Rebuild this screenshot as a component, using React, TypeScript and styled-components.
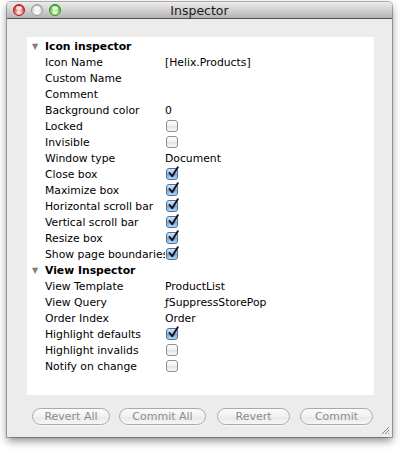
import React from "react";
import styled, { createGlobalStyle } from "styled-components";

const Global = createGlobalStyle`
  html, body { margin: 0; padding: 0; background: #ffffff; }
  body { font-family: "DejaVu Sans", "Liberation Sans", sans-serif; }
`;

const Page = styled.div`
  width: 401px;
  height: 452px;
  box-sizing: border-box;
  padding: 2px 9px 0 7px;
  background: #ffffff;
`;

const Window = styled.div`
  width: 385px;
  height: 435px;
  display: flex;
  flex-direction: column;
  background: #ececec;
  box-shadow: 0 0 0 1px rgba(0, 0, 0, 0.28), 0 4px 8px rgba(0, 0, 0, 0.45);
  border-radius: 4px 4px 0 0;
  position: relative;
`;

const TitleBar = styled.div`
  height: 16px;
  flex: none;
  display: flex;
  align-items: center;
  position: relative;
  padding: 0 0 0 6px;
  background: linear-gradient(#ececec, #d4d4d4 45%, #b4b4b4 100%);
  border-bottom: 1px solid #4f4f4f;
  border-radius: 4px 4px 0 0;
`;

const Lights = styled.div`
  display: flex;
  gap: 6px;
  z-index: 1;
`;

const Light = styled.div<{ $c: string; $d: string }>`
  width: 12px;
  height: 12px;
  border-radius: 50%;
  box-sizing: border-box;
  border: 1px solid ${(p) => p.$d};
  background: radial-gradient(circle at 50% 75%, #ffffff 0%, ${(p) => p.$c} 55%, ${(p) => p.$d} 100%);
  position: relative;
  &::after {
    content: "";
    position: absolute;
    left: 2px;
    top: 1px;
    width: 6px;
    height: 4px;
    border-radius: 50%;
    background: rgba(255, 255, 255, 0.8);
  }
`;

const Title = styled.div`
  position: absolute;
  left: 0;
  right: 0;
  top: 0;
  bottom: 0;
  display: flex;
  align-items: center;
  justify-content: center;
  font-size: 12.5px;
  color: #1a1a1a;
  font-family: "DejaVu Sans", sans-serif;
`;

const Body = styled.div`
  flex: 1;
  display: flex;
  flex-direction: column;
  padding: 18px 18px 0 20px;
`;

const Panel = styled.div`
  height: 358px;
  background: #ffffff;
  padding-top: 1px;
  box-sizing: border-box;
`;

const Row = styled.div`
  height: 16px;
  display: flex;
  align-items: center;
  font-size: 10.8px;
  color: #000;
`;

const Triangle = styled.span`
  width: 18px;
  padding-left: 5px;
  box-sizing: border-box;
  color: #808080;
  font-size: 8px;
`;

const SectionTitle = styled.span`
  font-weight: bold;
`;

const Label = styled.span`
  width: 120px;
  padding-left: 18px;
  white-space: nowrap;
  overflow: hidden;
  flex: none;
`;

const Value = styled.span`
  white-space: nowrap;
`;

const Box = styled.span<{ $on?: boolean }>`
  display: inline-flex;
  width: 12px;
  height: 12px;
  box-sizing: border-box;
  border-radius: 3px;
  margin-left: 1px;
  border: 1px solid ${(p) => (p.$on ? "#4f6e98" : "#8e8e8e")};
  background: ${(p) =>
    p.$on
      ? "linear-gradient(#d3e6f9, #8cb8e6 50%, #6fa4dc 51%, #b8d8f6)"
      : "linear-gradient(#ffffff, #f0f0f0 50%, #e2e2e2 51%, #fafafa)"};
  position: relative;
  overflow: visible;
`;

const Check = styled.svg`
  position: absolute;
  left: 1px;
  top: -3px;
  width: 11px;
  height: 12px;
`;

const ButtonBar = styled.div`
  display: flex;
  padding: 13px 0 0 5px;
`;

const Btn = styled.div<{ $w: number; $ml: number }>`
  width: ${(p) => p.$w}px;
  margin-left: ${(p) => p.$ml}px;
  height: 17px;
  box-sizing: border-box;
  border: 1px solid #a9a9a9;
  border-radius: 9px;
  background: linear-gradient(#fbfbfb, #f1f1f1 50%, #e8e8e8 51%, #f6f6f6);
  color: #8c8c8c;
  font-size: 11px;
  display: flex;
  align-items: center;
  justify-content: center;
  box-shadow: 0 1px 0 rgba(255, 255, 255, 0.7);
`;

const Grip = styled.svg`
  position: absolute;
  right: 2px;
  bottom: 2px;
  width: 9px;
  height: 9px;
`;

function CheckBox({ on }: { on?: boolean }) {
  return (
    <Box $on={on}>
      {on && (
        <Check viewBox="0 0 11 12">
          <path d="M1.5 7 L4.2 10.2 L9.8 1.2" fill="none" stroke="#111" strokeWidth="1.9" strokeLinecap="round" strokeLinejoin="round" />
        </Check>
      )}
    </Box>
  );
}

type Item = { label: string; text?: string; check?: boolean; on?: boolean };

const icon: Item[] = [
  { label: "Icon Name", text: "[Helix.Products]" },
  { label: "Custom Name" },
  { label: "Comment" },
  { label: "Background color", text: "0" },
  { label: "Locked", check: true },
  { label: "Invisible", check: true },
  { label: "Window type", text: "Document" },
  { label: "Close box", check: true, on: true },
  { label: "Maximize box", check: true, on: true },
  { label: "Horizontal scroll bar", check: true, on: true },
  { label: "Vertical scroll bar", check: true, on: true },
  { label: "Resize box", check: true, on: true },
  { label: "Show page boundaries", check: true, on: true },
];

const view: Item[] = [
  { label: "View Template", text: "ProductList" },
  { label: "View Query", text: "ƒSuppressStorePop" },
  { label: "Order Index", text: "Order" },
  { label: "Highlight defaults", check: true, on: true },
  { label: "Highlight invalids", check: true },
  { label: "Notify on change", check: true },
];

function Rows({ items }: { items: Item[] }) {
  return (
    <>
      {items.map((it) => (
        <Row key={it.label}>
          <Label>{it.label}</Label>
          {it.check ? <CheckBox on={it.on} /> : <Value>{it.text ?? ""}</Value>}
        </Row>
      ))}
    </>
  );
}

export default function App() {
  return (
    <Page>
      <Global />
      <Window>
        <TitleBar>
          <Lights>
            <Light $c="#f0524a" $d="#a3201b" />
            <Light $c="#dcdcdc" $d="#9a9a9a" />
            <Light $c="#6fcf4a" $d="#2f8a1c" />
          </Lights>
          <Title>Inspector</Title>
        </TitleBar>
        <Body>
          <Panel>
            <Row>
              <Triangle>▼</Triangle>
              <SectionTitle>Icon inspector</SectionTitle>
            </Row>
            <Rows items={icon} />
            <Row>
              <Triangle>▼</Triangle>
              <SectionTitle>View Inspector</SectionTitle>
            </Row>
            <Rows items={view} />
          </Panel>
          <ButtonBar>
            <Btn $w={78} $ml={0}>Revert All</Btn>
            <Btn $w={87} $ml={9}>Commit All</Btn>
            <Btn $w={73} $ml={11}>Revert</Btn>
            <Btn $w={73} $ml={10}>Commit</Btn>
          </ButtonBar>
        </Body>
        <Grip viewBox="0 0 9 9">
          <path d="M8 1 L1 8 M8 4 L4 8 M8 7 L7 8" stroke="#8a8a8a" strokeWidth="1" />
        </Grip>
      </Window>
    </Page>
  );
}
